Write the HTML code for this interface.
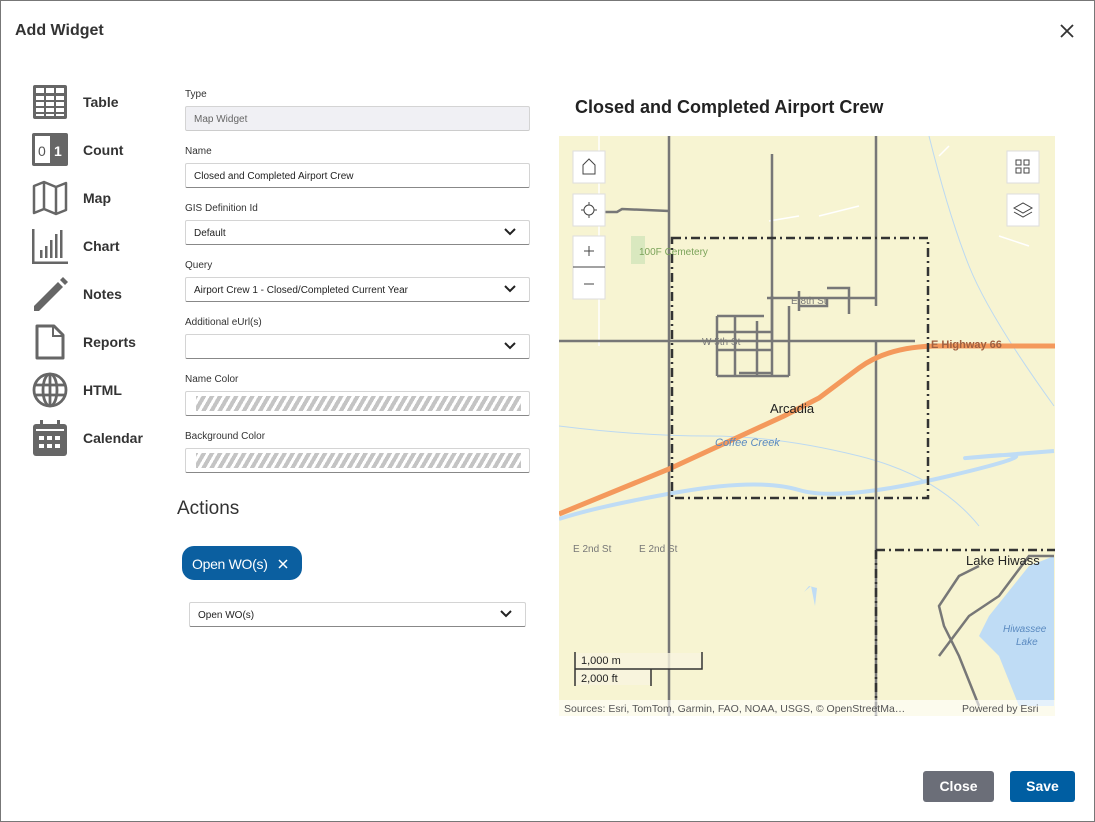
<!DOCTYPE html>
<html><head><meta charset="utf-8"><style>
*{box-sizing:border-box;margin:0;padding:0}
body{width:1095px;height:822px;background:#fff;font-family:"Liberation Sans",sans-serif;color:#333;position:relative;overflow:hidden}
.frame{position:absolute;left:0;top:0;width:1095px;height:822px;border:1px solid #777}
.abs{position:absolute}
.title{left:15px;top:22px;font-size:16px;font-weight:bold;color:#333}
.nav{left:32px;width:140px}
.nav .it{position:absolute;left:0;height:36px;width:140px}
.nav .lb{position:absolute;left:51px;top:10px;font-size:14px;font-weight:bold;color:#333}
.nav svg{position:absolute;left:0;top:0}
.lbl{position:absolute;left:185px;font-size:10px;color:#333}
.fld{position:absolute;left:185px;width:345px;height:25px;border:1px solid #d4d4d4;border-bottom:1px solid #888;border-radius:2px;font-size:10px;padding:7px 8px;color:#222;background:#fff}
.fld .chev{position:absolute;right:13px;top:7px}
.hatch{background:repeating-linear-gradient(-60deg,#c4c4c4 0 4px,#fff 4px 7px);position:absolute;left:10px;right:8px;top:4px;bottom:4px}
.btn{position:absolute;top:771px;height:31px;border-radius:3px;color:#fff;font-weight:bold;font-size:14px;text-align:center;line-height:31px}
</style></head><body>
<div class="frame"></div>
<div class="abs title">Add Widget</div>
<svg class="abs" style="left:1060px;top:24px" width="14" height="14"><path d="M1 1L13 13M13 1L1 13" stroke="#333" stroke-width="1.8"/></svg>

<div class="abs nav" style="top:0">
 <div class="it" style="top:84px"><svg width="36" height="36" viewBox="0 0 36 36"><rect x="1" y="1" width="34" height="34" rx="2" fill="#666"/><g fill="#fff"><rect x="4" y="4" width="8" height="5"/><rect x="14" y="4" width="8" height="5"/><rect x="24" y="4" width="8" height="5"/><rect x="4" y="12" width="8" height="4"/><rect x="14" y="12" width="8" height="4"/><rect x="24" y="12" width="8" height="4"/><rect x="4" y="18" width="8" height="4"/><rect x="14" y="18" width="8" height="4"/><rect x="24" y="18" width="8" height="4"/><rect x="4" y="24" width="8" height="4"/><rect x="14" y="24" width="8" height="4"/><rect x="24" y="24" width="8" height="4"/><rect x="4" y="30" width="8" height="2"/><rect x="14" y="30" width="8" height="2"/><rect x="24" y="30" width="8" height="2"/></g></svg><div class="lb">Table</div></div>
 <div class="it" style="top:132px"><svg width="36" height="36" viewBox="0 0 36 36"><rect x="0" y="1" width="36" height="33" rx="2" fill="#666"/><rect x="3" y="4" width="15" height="27" fill="#fff"/><text x="6" y="24" font-size="14" fill="#555" font-family="Liberation Sans">0</text><text x="22" y="24" font-size="14" fill="#fff" font-weight="bold" font-family="Liberation Sans">1</text></svg><div class="lb">Count</div></div>
 <div class="it" style="top:180px"><svg width="36" height="36" viewBox="0 0 36 36"><path d="M2 6L12 2L24 7L34 3V30L24 34L12 29L2 33Z M12 2V29 M24 7V34" fill="none" stroke="#666" stroke-width="2.5" stroke-linejoin="round"/></svg><div class="lb">Map</div></div>
 <div class="it" style="top:228px"><svg width="36" height="36" viewBox="0 0 36 36"><path d="M1 1V35H36" fill="none" stroke="#666" stroke-width="3"/><g fill="#666"><rect x="8" y="22" width="2.5" height="8"/><rect x="13" y="18" width="2.5" height="12"/><rect x="18" y="12" width="2.5" height="18"/><rect x="23" y="6" width="2.5" height="24"/><rect x="28" y="2" width="2.5" height="28"/></g></svg><div class="lb">Chart</div></div>
 <div class="it" style="top:276px"><svg width="36" height="36" viewBox="0 0 36 36"><path d="M2 30L26 6L31 11L7 35H2Z" fill="#666"/><path d="M28 4L31 1L36 6L33 9Z" fill="#666"/></svg><div class="lb">Notes</div></div>
 <div class="it" style="top:324px"><svg width="36" height="36" viewBox="0 0 36 36"><path d="M5 2H22L31 11V34H5Z" fill="none" stroke="#666" stroke-width="3" stroke-linejoin="round"/><path d="M21 2V12H31" fill="none" stroke="#666" stroke-width="2"/></svg><div class="lb">Reports</div></div>
 <div class="it" style="top:372px"><svg width="36" height="36" viewBox="0 0 36 36"><g fill="none" stroke="#666" stroke-width="2.8"><circle cx="18" cy="18" r="16"/><ellipse cx="18" cy="18" rx="7" ry="16"/><path d="M2 13H34M2 23H34M18 2V34"/></g></svg><div class="lb">HTML</div></div>
 <div class="it" style="top:420px"><svg width="36" height="36" viewBox="0 0 36 36"><rect x="1" y="4" width="34" height="32" rx="3" fill="#666"/><rect x="8" y="0" width="3" height="7" fill="#666"/><rect x="25" y="0" width="3" height="7" fill="#666"/><rect x="4" y="9" width="28" height="2" fill="#fff"/><g fill="#fff"><rect x="7" y="16" width="5" height="4"/><rect x="15" y="16" width="5" height="4"/><rect x="23" y="16" width="5" height="4"/><rect x="7" y="24" width="5" height="4"/><rect x="15" y="24" width="5" height="4"/><rect x="23" y="24" width="5" height="4"/></g></svg><div class="lb">Calendar</div></div>
</div>

<div class="lbl" style="top:89px">Type</div>
<div class="fld" style="top:106px;background:#f0f0f4;color:#666;border-bottom-color:#ccc">Map Widget</div>
<div class="lbl" style="top:146px">Name</div>
<div class="fld" style="top:163px">Closed and Completed Airport Crew</div>
<div class="lbl" style="top:203px">GIS Definition Id</div>
<div class="fld" style="top:220px">Default<svg class="chev" width="12" height="8"><path d="M1 1L6 6L11 1" fill="none" stroke="#222" stroke-width="2"/></svg></div>
<div class="lbl" style="top:260px">Query</div>
<div class="fld" style="top:277px">Airport Crew 1 - Closed/Completed Current Year<svg class="chev" width="12" height="8"><path d="M1 1L6 6L11 1" fill="none" stroke="#222" stroke-width="2"/></svg></div>
<div class="lbl" style="top:317px">Additional eUrl(s)</div>
<div class="fld" style="top:334px"><svg class="chev" width="12" height="8"><path d="M1 1L6 6L11 1" fill="none" stroke="#222" stroke-width="2"/></svg></div>
<div class="lbl" style="top:374px">Name Color</div>
<div class="fld" style="top:391px"><div class="hatch"></div></div>
<div class="lbl" style="top:431px">Background Color</div>
<div class="fld" style="top:448px"><div class="hatch"></div></div>

<div class="abs" style="left:177px;top:498px;font-size:19px;color:#333">Actions</div>
<div class="abs" style="left:182px;top:546px;width:120px;height:34px;border-radius:12px;background:#0b5fa0;color:#fff;font-size:14px;line-height:36px;padding-left:10px;letter-spacing:-0.3px">Open WO(s)<svg style="position:absolute;left:96px;top:13px" width="10" height="10"><path d="M1 1L9 9M9 1L1 9" stroke="#fff" stroke-width="1.5"/></svg></div>
<div class="fld" style="left:189px;top:602px;width:337px;font-size:10px">Open WO(s)<svg class="chev" width="12" height="8"><path d="M1 1L6 6L11 1" fill="none" stroke="#222" stroke-width="2"/></svg></div>

<div class="abs" style="left:575px;top:97px;font-size:18px;font-weight:bold;color:#222">Closed and Completed Airport Crew</div>

<svg class="abs" style="left:559px;top:136px" width="496" height="580" viewBox="0 0 496 580">
<rect width="496" height="580" fill="#f7f4d2"/>
<g fill="none" stroke="#fff" stroke-width="1.5">
<path d="M40 0V210M210 85L240 80M260 80L300 70M380 20L390 10M440 100L470 110"/>
</g>
<g fill="none" stroke="#bcd9f2" stroke-width="1">
<path d="M0 290Q80 300 150 300T300 320T420 390M370 0Q390 80 410 130T495 270"/>
</g>
<path d="M0 383Q40 370 120 356T240 354T390 340T430 320T495 315" fill="none" stroke="#bfdcf5" stroke-width="4"/>
<path d="M495 420L470 430L430 480L420 500L440 520L460 570L495 570Z" fill="#bfdcf5"/>
<path d="M250 450L258 452L256 470L252 450L245 456Z" fill="#bfdcf5"/>
<rect x="72" y="100" width="14" height="28" fill="#d9e8bf"/>
<g fill="none" stroke="#777" stroke-width="2.5">
<path d="M110 0V580M317 0V170M317 205V580M0 205H356M213 18V205M35 76H58L63 73L110 75"/>
<path d="M158 180H205M158 180V240M176 180V240M198 185V240M213 160V240M230 170V240M158 196H213M158 214H213M158 240H230M208 162H317M240 162V175M240 155V170H268V162M268 152H290V178M180 237H213"/>
<path d="M380 520L410 480L440 460L470 420L495 420M420 430L400 440L380 470L385 490L400 520L420 570"/>
</g>
<path d="M0 378L110 333L225 280L260 262L300 232Q330 210 380 210H496" fill="none" stroke="#f4995c" stroke-width="5"/>
<g fill="none" stroke="#333" stroke-width="2.5" stroke-dasharray="9 4 2 4">
<path d="M113 102H369V362H113ZM317 414H496M317 414V580"/>
</g>
<g font-family="Liberation Sans" font-size="10" fill="#777">
<text x="143" y="209">W 5th St</text><text x="232" y="168">E 8th St</text><text x="14" y="416">E 2nd St</text><text x="80" y="416">E 2nd St</text>
</g>
<text x="80" y="119" font-family="Liberation Sans" font-size="10" fill="#7ba35a">100F Cemetery</text>
<text x="372" y="212" font-family="Liberation Sans" font-size="11" font-weight="bold" fill="#a06040">E Highway 66</text>
<text x="211" y="277" font-family="Liberation Sans" font-size="13" fill="#222">Arcadia</text>
<text x="156" y="310" font-family="Liberation Sans" font-size="11" font-style="italic" fill="#5a8ac0">Coffee Creek</text>
<text x="407" y="429" font-family="Liberation Sans" font-size="13" fill="#222">Lake Hiwass</text>
<text x="444" y="496" font-family="Liberation Sans" font-size="10" font-style="italic" fill="#5a8ac0">Hiwassee</text>
<text x="457" y="509" font-family="Liberation Sans" font-size="10" font-style="italic" fill="#5a8ac0">Lake</text>
<g fill="#fff" stroke="#ddd"><rect x="14" y="15" width="32" height="32"/><rect x="14" y="58" width="32" height="32"/><rect x="14" y="100" width="32" height="63"/><rect x="448" y="15" width="32" height="32"/><rect x="448" y="58" width="32" height="32"/></g>
<g fill="none" stroke="#444" stroke-width="1"><path d="M24 38V29L30 23L36 29V38Z"/><circle cx="30" cy="74" r="5"/><path d="M30 66V69M30 79V82M22 74H25M35 74H38M25 115H35M30 110V120M25 148H35M14 131H46"/><path d="M457 24h5v5h-5zM465 24h5v5h-5zM457 32h5v5h-5zM465 32h5v5h-5z"/><path d="M455 72L464 67L473 72L464 77ZM455 76L464 81L473 76"/></g>
<rect x="16" y="517" width="128" height="16" fill="#f7f4e0" opacity=".8"/>
<rect x="16" y="533" width="76" height="16" fill="#f7f4e0" opacity=".8"/>
<path d="M16 516V550M16 533H143V516M92 533V550" fill="none" stroke="#333" stroke-width="1.5"/>
<text x="22" y="528" font-family="Liberation Sans" font-size="11" fill="#222">1,000 m</text>
<text x="22" y="546" font-family="Liberation Sans" font-size="11" fill="#222">2,000 ft</text>
<rect x="0" y="564" width="496" height="16" fill="#fff" opacity=".6"/>
<text x="5" y="576" font-family="Liberation Sans" font-size="10.5" fill="#555">Sources: Esri, TomTom, Garmin, FAO, NOAA, USGS, © OpenStreetMa…</text>
<text x="403" y="576" font-family="Liberation Sans" font-size="10.5" fill="#555">Powered by Esri</text>
</svg>

<div class="btn" style="left:923px;width:71px;background:#6b6e78">Close</div>
<div class="btn" style="left:1010px;width:65px;background:#005ea2">Save</div>
</body></html>
